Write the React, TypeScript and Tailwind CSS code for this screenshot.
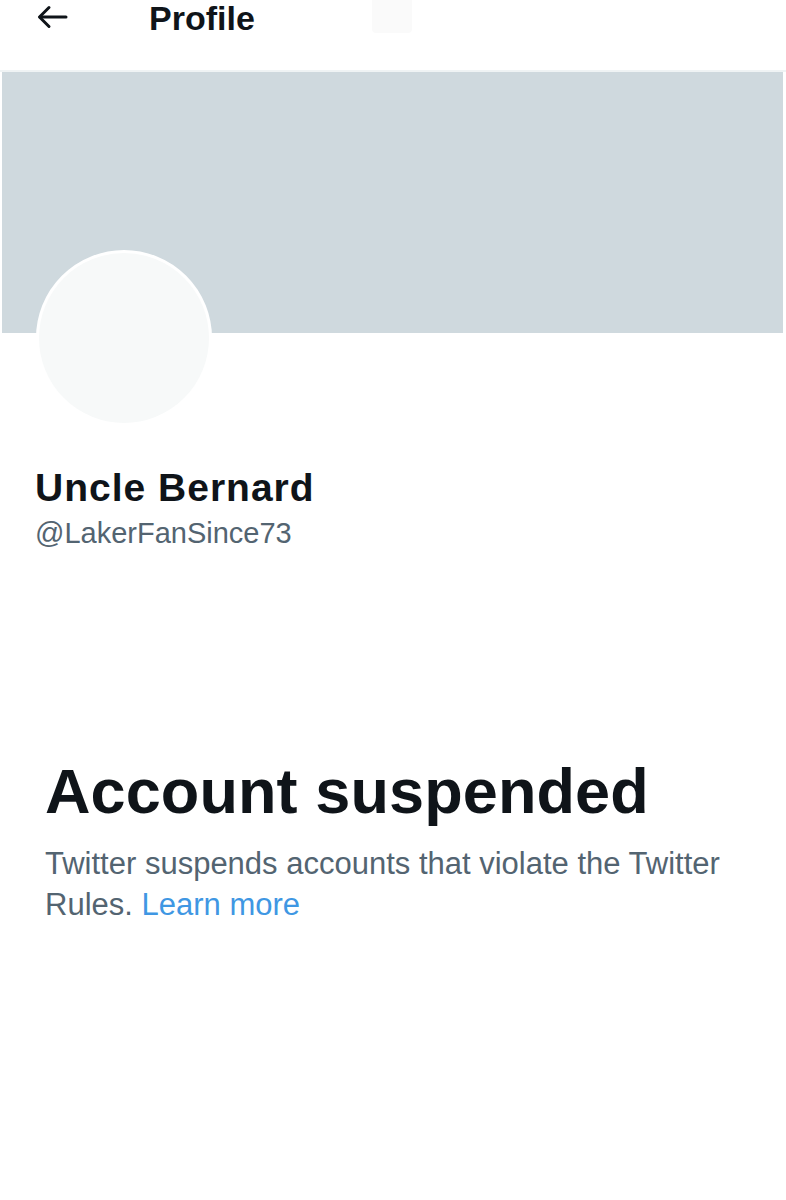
import React from 'react'

const sans = { fontFamily: '"Liberation Sans", Arial, sans-serif' }

const BackArrow: React.FC = () => (
  <svg width="32" height="24" viewBox="0 0 32 24" fill="none" stroke="#0f1419" strokeWidth="3" strokeLinecap="round" strokeLinejoin="round">
    <path d="M29 12H3" />
    <path d="M12 2.5 2.5 12l9.5 9.5" />
  </svg>
)

export default function App() {
  return (
    <div className="w-[786px] min-h-[1200px] bg-white text-[#0f1419]" style={sans}>
      {/* header */}
      <div className="h-[72px] border-b-2 border-[#eff3f4] flex items-start">
        <div className="ml-[37px] mt-[5px]">
          <BackArrow />
        </div>
        <div className="ml-[80px] text-[34px] leading-[34px] font-bold mt-[1px]">Profile</div>
        <div className="ml-[117px] w-[40px] h-[33px] bg-[#fafafa] rounded-b-[4px]" />
      </div>

      {/* banner */}
      <div className="ml-[2px] mr-[3px] h-[261px] bg-[#cfd9de]" />

      {/* avatar */}
      <div className="ml-[36px] -mt-[83px] w-[176px] h-[176px] rounded-full bg-[#f7f9f9] border-[3px] border-white relative" />

      {/* names */}
      <div className="pl-[35px]">
        <div className="mt-[38px] text-[39px] leading-[47px] font-bold tracking-[1px]">Uncle Bernard</div>
        <div className="mt-[4px] text-[29px] leading-[36px] text-[#536471]">@LakerFanSince73</div>
      </div>

      {/* suspended notice */}
      <div className="pl-[45px] pr-[30px] mt-[209px]">
        <h1 className="text-[63px] leading-[63px] font-bold tracking-[0.1px]">Account suspended</h1>
        <p className="mt-[20px] text-[31px] leading-[41px] text-[#536471] max-w-[705px]">
          Twitter suspends accounts that violate the Twitter Rules.{' '}
          <a href="#" className="text-[#3f97e3]">Learn more</a>
        </p>
      </div>
    </div>
  )
}
